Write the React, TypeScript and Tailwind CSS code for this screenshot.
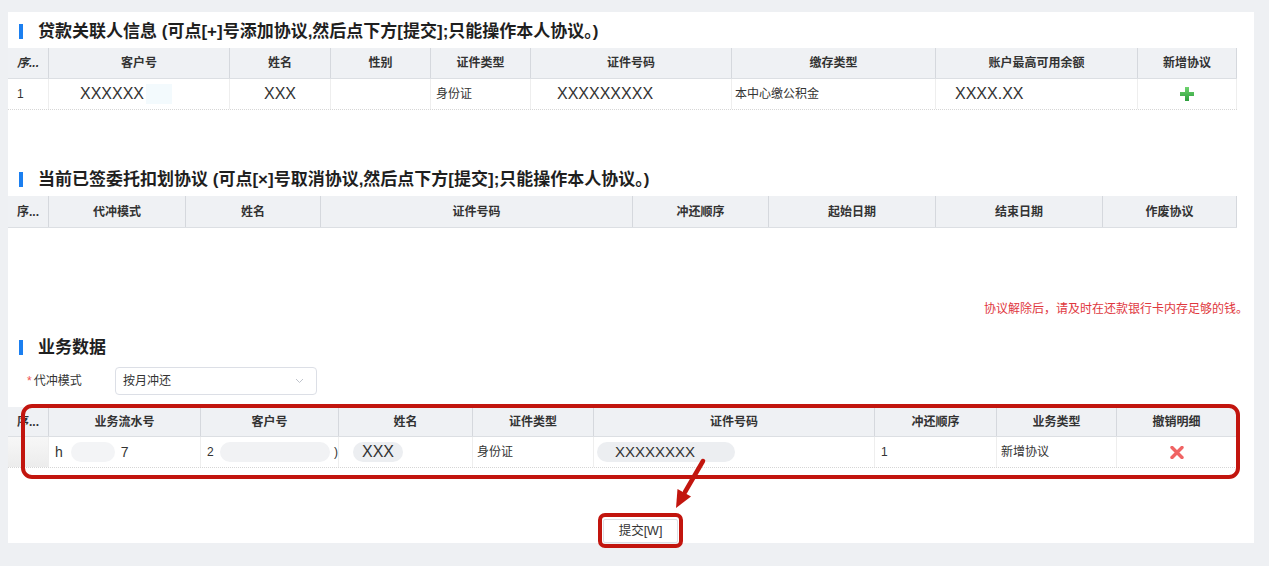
const font = "font-['Liberation_Sans','Noto_Sans_CJK_SC',sans-serif]";

function Title({ text }: { text: string }) {
  return (
    <div className="flex h-[36px] items-center gap-[15px] pl-[11px] pt-[2px]">
      <span className="h-[15px] w-[4px] bg-[#1b7ff0]" />
      <span className="text-[17px] font-bold leading-none text-[#1f1f1f]">{text}</span>
    </div>
  );
}

function Head({ label, italic }: { label: string; italic?: boolean }) {
  return (
    <div
      className={`flex items-center justify-center border-r border-[#d5d8dd] text-[12px] font-bold text-[#333] ${
        italic ? "italic" : ""
      }`}
    >
      {label}
    </div>
  );
}

function Plus() {
  return (
    <svg width="14" height="14" viewBox="0 0 14 14">
      <defs>
        <linearGradient id="gp" x1="0" y1="0" x2="0" y2="1">
          <stop offset="0" stopColor="#6fd46f" />
          <stop offset="1" stopColor="#2c9d3c" />
        </linearGradient>
      </defs>
      <path d="M5 0h4v5h5v4H9v5H5V9H0V5h5z" fill="url(#gp)" />
    </svg>
  );
}

function Cross() {
  return (
    <svg width="14" height="13" viewBox="0 0 14 13">
      <path d="M2 1.5l10 10M12 1.5l-10 10" stroke="#f06464" strokeWidth="3.4" strokeLinecap="round" />
    </svg>
  );
}

export default function App() {
  const cell = "flex items-center border-r border-[#eeeeee] text-[12px] text-[#333]";
  return (
    <div className={`h-[566px] w-[1269px] bg-[#eef0f3] pl-[8px] pt-[12px] ${font}`}>
      <div className="relative h-[531px] w-[1246px] bg-white">
        <Title text="贷款关联人信息 (可点[+]号添加协议,然后点下方[提交];只能操作本人协议。)" />
        <div className="w-[1229px]">
          <div className="grid h-[31px] grid-cols-[41px_181px_101px_100px_100px_201px_204px_202px_99px] border-b border-[#dcdfe3] bg-[#eff1f4]">
            <Head label="序..." italic />
            <Head label="客户号" />
            <Head label="姓名" />
            <Head label="性别" />
            <Head label="证件类型" />
            <Head label="证件号码" />
            <Head label="缴存类型" />
            <Head label="账户最高可用余额" />
            <Head label="新增协议" />
          </div>
          <div className="grid h-[31px] grid-cols-[41px_181px_101px_100px_100px_201px_204px_202px_99px] border-b border-dotted border-[#d6d6d6]">
            <div className={`${cell} pl-[9px]`}>1</div>
            <div className={`${cell} pl-[31px] text-[16px]`}>
              XXXXXX
              <span className="ml-[2px] h-[20px] w-[26px] bg-[#f3fafd]" />
            </div>
            <div className={`${cell} justify-center text-[16px]`}>XXX</div>
            <div className={cell} />
            <div className={`${cell} pl-[5px]`}>身份证</div>
            <div className={`${cell} pl-[26px] text-[16px]`}>XXXXXXXXX</div>
            <div className={`${cell} pl-[3px]`}>本中心缴公积金</div>
            <div className={`${cell} pl-[19px] text-[16px]`}>XXXX.XX</div>
            <div className={`${cell} justify-center`}>
              <Plus />
            </div>
          </div>
        </div>

        <div className="mt-[50px]">
          <Title text="当前已签委托扣划协议 (可点[×]号取消协议,然后点下方[提交];只能操作本人协议。)" />
        </div>
        <div className="grid h-[32px] w-[1229px] grid-cols-[41px_137px_135px_312px_136px_167px_167px_134px] border-b border-[#dcdfe3] bg-[#eff1f4]">
          <Head label="序..." />
          <Head label="代冲模式" />
          <Head label="姓名" />
          <Head label="证件号码" />
          <Head label="冲还顺序" />
          <Head label="起始日期" />
          <Head label="结束日期" />
          <Head label="作废协议" />
        </div>

        <div className="mt-[71px] h-[20px] pr-[6px] text-right text-[12px] leading-[20px] text-[#e0383e]">
          协议解除后，请及时在还款银行卡内存足够的钱。
        </div>

        <div className="mt-[9px]">
          <Title text="业务数据" />
        </div>
        <div className="mt-[3px] flex h-[28px] items-center">
          <span className="ml-[19px] w-[88px] text-[12px] text-[#333]">
            <span className="mr-[2px] text-[#f0524f]">*</span>代冲模式
          </span>
          <div className="flex h-[28px] w-[202px] items-center justify-between rounded-[4px] border border-[#dcdfe6] pl-[7px] pr-[12px] text-[12px] text-[#333]">
            按月冲还
            <svg width="9" height="6" viewBox="0 0 9 6">
              <path d="M1 1l3.5 3.5L8 1" fill="none" stroke="#c0c4cc" strokeWidth="1" />
            </svg>
          </div>
        </div>

        <div className="relative mt-[12px] w-[1229px]">
          <div className="grid h-[30px] grid-cols-[41px_152px_138px_134px_121px_281px_122px_120px_120px] border-b border-[#dcdfe3] bg-[#eff1f4]">
            <Head label="序..." />
            <Head label="业务流水号" />
            <Head label="客户号" />
            <Head label="姓名" />
            <Head label="证件类型" />
            <Head label="证件号码" />
            <Head label="冲还顺序" />
            <Head label="业务类型" />
            <Head label="撤销明细" />
          </div>
          <div className="grid h-[31px] grid-cols-[41px_152px_138px_134px_121px_281px_122px_120px_120px] border-b border-dotted border-[#d6d6d6]">
            <div className={`${cell} bg-gradient-to-b from-[#f7f7f7] to-[#ececec]`} />
            <div className={`${cell} pl-[6px] text-[14px]`}>
              h
              <span className="ml-[8px] h-[20px] w-[44px] rounded-[10px] bg-[#f3f4f6]" />
              <span className="ml-[6px]">7</span>
            </div>
            <div className={`${cell} pl-[6px] text-[12px]`}>
              2
              <span className="ml-[6px] h-[20px] w-[112px] rounded-[10px] bg-[#f1f2f4]" />
              <span className="ml-[4px]">)</span>
            </div>
            <div className={`${cell} pl-[14px]`}>
              <span className="flex h-[20px] items-center rounded-[10px] bg-[#eceef1] px-[9px] text-[16px]">XXX</span>
            </div>
            <div className={`${cell} pl-[4px]`}>身份证</div>
            <div className={`${cell} pl-[3px]`}>
              <span className="flex h-[20px] w-[138px] items-center rounded-[10px] bg-[#eceef1] pl-[18px] text-[15px]">
                XXXXXXXX
              </span>
            </div>
            <div className={`${cell} pl-[6px]`}>1</div>
            <div className={`${cell} pl-[4px]`}>新增协议</div>
            <div className={`${cell} justify-center`}>
              <Cross />
            </div>
          </div>
          <div className="pointer-events-none absolute left-[13px] top-[-3px] h-[75px] w-[1219px] rounded-[11px] border-[4px] border-[#c2150e]" />
        </div>

        <div className="mt-[45px] flex pl-[590px]">
          <div className="rounded-[7px] border-[4px] border-[#c2150e] p-[1px]">
            <button className="h-[24px] w-[75px] rounded-[2px] border border-[#dcdfe6] bg-white text-[12.5px] text-[#333]">
              提交[W]
            </button>
          </div>
        </div>

        <svg
          className="pointer-events-none absolute left-[652px] top-[443px]"
          width="60"
          height="60"
          viewBox="0 0 60 60"
        >
          <path d="M43 6L25 37" stroke="#c2150e" strokeWidth="4.5" strokeLinecap="round" />
          <path d="M16 53L31 41.5L17.5 34z" fill="#c2150e" />
        </svg>
      </div>
    </div>
  );
}
